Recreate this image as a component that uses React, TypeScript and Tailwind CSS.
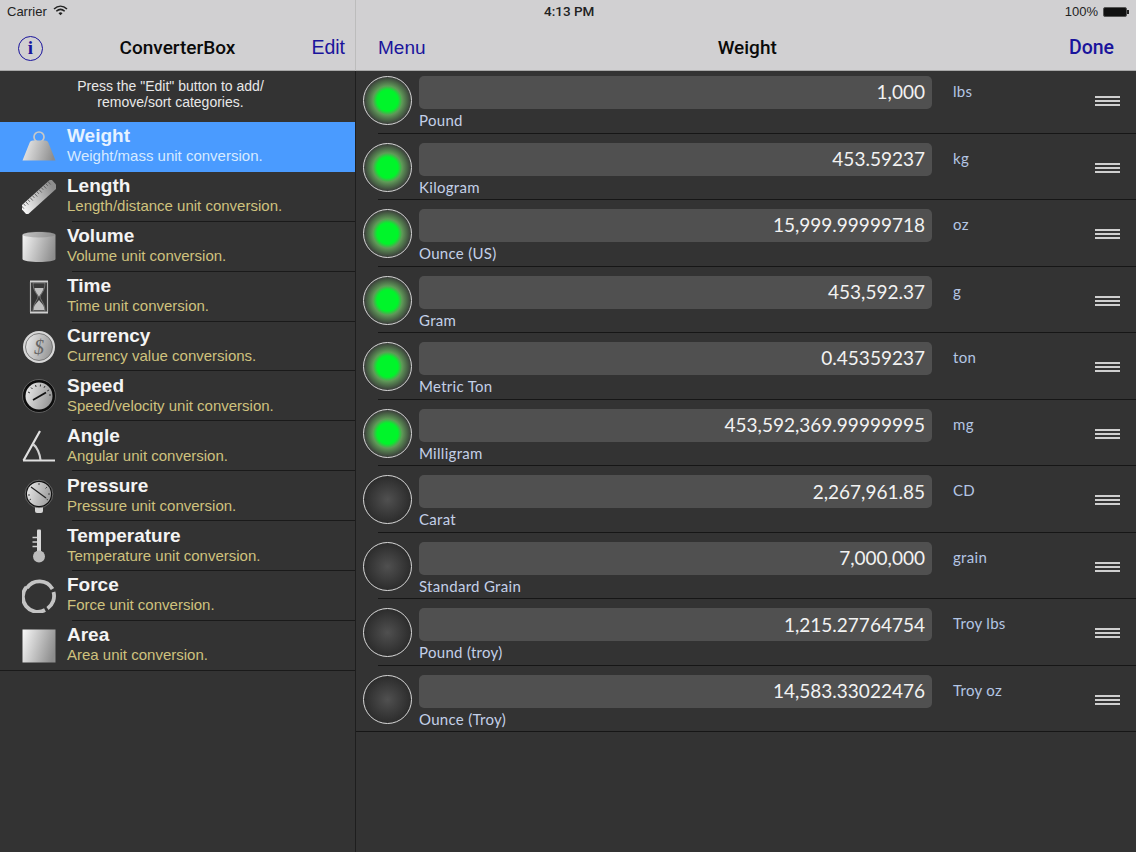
import React from 'react';

const rightFont = "font-['Lato','Noto_Sans',sans-serif]";

function Gradient({ id, from = '#f4f4f4', to = '#8d8d8d' }: { id: string; from?: string; to?: string }) {
  return (
    <defs>
      <linearGradient id={id} gradientUnits="userSpaceOnUse" x1="0" y1="8" x2="34" y2="18">
        <stop offset="0" stopColor={from} />
        <stop offset="1" stopColor={to} />
      </linearGradient>
    </defs>
  );
}

// 34x34 category icons, roughly as in the original bitmaps
function CategoryIcon({ name }: { name: string }) {
  const fill = `url(#g-${name})`;
  let body: React.ReactNode = null;
  if (name === 'Weight') {
    body = (
      <>
        <circle cx="17" cy="7" r="5" fill="none" stroke="#c8c8c8" strokeWidth="1.700" />
        <path d="M11 10.500H23C25 10.500 26 11.500 26.500 13L33.500 30.500H0.500L7.500 13C8 11.500 9 10.500 11 10.500Z" fill={fill} />
      </>
    );
  } else if (name === 'Length') {
    body = (
      <g transform="rotate(-42 17 17)">
        <rect x="-4" y="11.500" width="42" height="11" fill={fill} />
        <path d="M-2 11.500v4M1 11.500v3M4 11.500v4M7 11.500v3M10 11.500v4M13 11.500v3M16 11.500v4M19 11.500v3M22 11.500v4M25 11.500v3M28 11.500v4M31 11.500v3M34 11.500v4" stroke="#555" strokeWidth="0.800" />
      </g>
    );
  } else if (name === 'Volume') {
    body = (
      <>
        <path d="M0.500 5C0.500 1 33.500 1 33.500 5V29C33.500 33 0.500 33 0.500 29Z" fill={fill} />
        <ellipse cx="17" cy="4.500" rx="16.500" ry="3" fill="#777" opacity="0.400" />
      </>
    );
  } else if (name === 'Time') {
    body = (
      <>
        <path d="M8 1.500H26M8 32.500H26" stroke="#d0d0d0" strokeWidth="1.800" />
        <path d="M8.500 2V32M25.500 2V32" stroke="#b0b0b0" strokeWidth="1.200" />
        <path d="M11 3H23C23 11 19 13 18 17C19 21 23 24 23 31H11C11 24 15 21 16 17C15 13 11 11 11 3Z" fill="#3a3a3a" stroke="#999" strokeWidth="0.600" />
        <path d="M12.500 8H21.500C21 12 18 14 17 17C16 14 13 12 12.500 8ZM11.500 30C12 24 15 23 17 20C19 23 22 24 22.500 30Z" fill="#c0c0c0" />
      </>
    );
  } else if (name === 'Currency') {
    body = (
      <>
        <circle cx="17" cy="17" r="16" fill="#d8d8d8" />
        <circle cx="17" cy="17" r="13.500" fill={fill} stroke="#666" strokeWidth="0.800" />
        <text x="17" y="24" textAnchor="middle" fontSize="20" fontFamily="'Liberation Serif',serif" fontStyle="italic" fill="#666">$</text>
      </>
    );
  } else if (name === 'Speed') {
    body = (
      <>
        <circle cx="17" cy="17" r="16.500" fill="#0d0d0d" stroke="#888" strokeWidth="0.600" />
        <circle cx="17" cy="17" r="13.500" fill={fill} />
        <path d="M6 13l2 1M9 8.500l1.500 1.500M13.500 6l.6 2M18.500 5.500l-.2 2M23 7l-1 1.800M27 11l-1.800 1M29 16h-2" stroke="#333" strokeWidth="1" />
        <path d="M11 21L24 13.500" stroke="#111" strokeWidth="1.800" />
      </>
    );
  } else if (name === 'Angle') {
    body = (
      <>
        <path d="M1 31.500H33M1.500 31.500L18 2" fill="none" stroke="#e0e0e0" strokeWidth="2.200" />
        <path d="M11 15C15 18 18 25 18.500 31" fill="none" stroke="#d0d0d0" strokeWidth="2.200" />
      </>
    );
  } else if (name === 'Pressure') {
    body = (
      <>
        <rect x="13" y="26" width="8" height="8" rx="2" fill="#d4d4d4" />
        <circle cx="17" cy="15" r="13.800" fill="#111" stroke="#999" strokeWidth="0.600" />
        <circle cx="17" cy="15" r="12" fill={fill} />
        <path d="M9 8L24 19" stroke="#222" strokeWidth="1.200" />
        <path d="M6 16h2M7.500 21l1.500-1M26 21l-1.500-1M28 15h-2M25 8l-1.500 1.500M17 4v2" stroke="#444" strokeWidth="1" />
      </>
    );
  } else if (name === 'Temperature') {
    body = (
      <>
        <rect x="15" y="0.500" width="4" height="24" rx="1" fill="#d8d8d8" />
        <circle cx="17" cy="27.500" r="6" fill="#bcbcbc" />
        <path d="M10.500 8.500H15M10.500 13H15M10.500 17.500H15" stroke="#d0d0d0" strokeWidth="1.600" />
      </>
    );
  } else if (name === 'Force') {
    body = (
      <path d="M5 9A15 15 0 0 1 30.500 10M31.500 13A15 15 0 0 1 25.500 29.500M23 31A15 15 0 0 1 4.500 8" fill="none" stroke="#c4c4c4" strokeWidth="3.800" />
    );
  } else {
    body = <rect x="0.500" y="0.500" width="33" height="33" fill={fill} />;
  }
  return (
    <svg width="34" height="34" viewBox="0 0 34 34" className="shrink-0">
      <Gradient id={`g-${name}`} />
      {body}
    </svg>
  );
}

const categories = [
  ['Weight', 'Weight/mass unit conversion.'],
  ['Length', 'Length/distance unit conversion.'],
  ['Volume', 'Volume unit conversion.'],
  ['Time', 'Time unit conversion.'],
  ['Currency', 'Currency value conversions.'],
  ['Speed', 'Speed/velocity unit conversion.'],
  ['Angle', 'Angular unit conversion.'],
  ['Pressure', 'Pressure unit conversion.'],
  ['Temperature', 'Temperature unit conversion.'],
  ['Force', 'Force unit conversion.'],
  ['Area', 'Area unit conversion.'],
];

const units = [
  { name: 'Pound', value: '1,000', unit: 'lbs', on: true },
  { name: 'Kilogram', value: '453.59237', unit: 'kg', on: true },
  { name: 'Ounce (US)', value: '15,999.99999718', unit: 'oz', on: true },
  { name: 'Gram', value: '453,592.37', unit: 'g', on: true },
  { name: 'Metric Ton', value: '0.45359237', unit: 'ton', on: true },
  { name: 'Milligram', value: '453,592,369.99999995', unit: 'mg', on: true },
  { name: 'Carat', value: '2,267,961.85', unit: 'CD', on: false },
  { name: 'Standard Grain', value: '7,000,000', unit: 'grain', on: false },
  { name: 'Pound (troy)', value: '1,215.27764754', unit: 'Troy lbs', on: false },
  { name: 'Ounce (Troy)', value: '14,583.33022476', unit: 'Troy oz', on: false },
];

function Lamp({ on }: { on: boolean }) {
  return (
    <div
      className={
        on
          ? 'w-[49px] h-[49px] shrink-0 rounded-full border-[1.500px] border-[#d8d8d8] bg-[radial-gradient(circle_closest-side,#00f52a_0%,#00f52a_44%,#5f9a58_62%,#3a3d3a_100%)]'
          : 'w-[49px] h-[49px] shrink-0 rounded-full border-[1.500px] border-[#d8d8d8] bg-[radial-gradient(circle_closest-side,#505050_0%,#2c2c2c_100%)]'
      }
    />
  );
}

function UnitRow({ name, value, unit, on, last }: { name: string; value: string; unit: string; on: boolean; last: boolean }) {
  return (
    <div className="relative h-[66.550px] flex items-start pl-[7px] pt-[9px]">
      <Lamp on={on} />
      <div className="ml-[7px] w-[513px]">
        <div className="h-[33px] rounded-[5px] bg-[#505050] flex items-center justify-end pr-[7px]">
          <span className={`${rightFont} text-[19px] text-[#f2f2f2]`}>{value}</span>
        </div>
        <div className={`${rightFont} text-[15px] leading-[22px] text-[#c3d0e8] tracking-[0.3px]`}>{name}</div>
      </div>
      <div className={`${rightFont} ml-[21px] w-[142px] text-[15px] leading-[31px] text-[#b4c6e4] tracking-[0.3px]`}>{unit}</div>
      <div className="flex flex-col gap-[2px] mt-[20px]">
        <div className="w-[25px] h-[2px] bg-[#cfcfcf]" />
        <div className="w-[25px] h-[2px] bg-[#cfcfcf]" />
        <div className="w-[25px] h-[2px] bg-[#cfcfcf]" />
      </div>
      <div className={last ? 'absolute left-0 right-0 bottom-0 h-px bg-[#161616]' : 'absolute left-[22px] right-0 bottom-0 h-px bg-[#161616]'} />
    </div>
  );
}

function StatusBar() {
  return (
    <div className="absolute top-0 left-0 right-0 h-[23px] px-[7px] flex items-center justify-between text-[13px] text-[#222] z-20 font-['Liberation_Sans',sans-serif]">
      <div className="flex items-center gap-[6px]">
        <span>Carrier</span>
        <svg width="15" height="11" viewBox="0 0 15 11" className="mb-[3px]">
          <path d="M1 4C5 0.300 10 0.300 14 4M3.300 6.300C6 3.800 9 3.800 11.700 6.300" fill="none" stroke="#222" strokeWidth="1.500" />
          <path d="M5.500 8.200C6.800 7 8.200 7 9.500 8.200L7.500 10.300Z" fill="#222" />
        </svg>
      </div>
      <span className="absolute left-[544px] font-['Roboto',sans-serif] font-medium text-[13.500px]">4:13 PM</span>
      <div className="flex items-center gap-[5px]">
        <span>100%</span>
        <div className="flex items-center">
          <div className="w-[24px] h-[10px] bg-[#111] rounded-[2px] border border-[#555]" />
          <div className="w-[2px] h-[4px] bg-[#222]" />
        </div>
      </div>
    </div>
  );
}

export default function App() {
  return (
    <div className="relative flex w-[1136px] h-[852px] overflow-hidden bg-[#333333] font-['Liberation_Sans',sans-serif]">
      <StatusBar />

      {/* Left: categories */}
      <div className="w-[355px] shrink-0 flex flex-col">
        <div className="h-[71px] bg-[#d1d0d2] border-b border-[#a8a8a8] pt-[26px] flex items-center justify-between pl-[18px] pr-[10px] relative">
          <div className="w-[25px] h-[25px] rounded-full border-[1.500px] border-[#1a149c] flex items-center justify-center text-[19px] font-bold font-['Liberation_Serif',serif] text-[#1a149c]">
            i
          </div>
          <span className="absolute left-0 w-[355px] text-center text-[19px] font-['Roboto',sans-serif] font-medium text-[#0a0a0a]">ConverterBox</span>
          <span className="text-[19.500px] text-[#1a149c]">Edit</span>
        </div>
        <div className="h-[51px] pt-[8px] text-center text-[14px] leading-[15.500px] text-[#e8e8e8] pr-[14px]">
          Press the "Edit" button to add/
          <br />
          remove/sort categories.
        </div>
        {categories.map(([name, desc], i) => (
          <div key={name} className={i === 0 ? 'relative h-[49.900px] flex items-center bg-[#4a9bff]' : 'relative h-[49.900px] flex items-center'}>
            <div className="w-[67px] pl-[22px] shrink-0 flex">
              <CategoryIcon name={name} />
            </div>
            <div className="pb-[5px]">
              <div className={i === 0 ? 'text-[19px] leading-[23px] font-bold text-[#e6f2ff]' : 'text-[19px] leading-[23px] font-bold text-[#f4f4f4]'}>{name}</div>
              <div className={i === 0 ? 'text-[15px] leading-[17px] text-[#d6eaff]' : 'text-[15px] leading-[17px] text-[#cfc27e]'}>{desc}</div>
            </div>
            {i > 0 && <div className={i === 10 ? 'absolute left-0 right-0 bottom-0 h-px bg-[#1a1a1a]' : 'absolute left-[72px] right-0 bottom-0 h-px bg-[#1a1a1a]'} />}
          </div>
        ))}
      </div>

      {/* Right: unit list */}
      <div className="flex-1 min-w-0 flex flex-col">
        <div className="relative z-10 h-[71px] shrink-0 bg-[#d1d0d2] border-b border-l border-b-[#a8a8a8] border-l-[#bcbcbc] pt-[26px] flex items-center justify-between pl-[22px] pr-[22px]">
          <span className="text-[19px] text-[#1a149c]">Menu</span>
          <span className="text-[19px] font-['Roboto',sans-serif] font-medium text-[#0a0a0a]">Weight</span>
          <span className="text-[19.500px] font-['Roboto',sans-serif] font-medium text-[#1a149c]">Done</span>
        </div>
        <div className="flex-1 -mt-[4px] border-l border-[#1e1e1e]">
          {units.map((u, i) => (
            <UnitRow key={u.name} {...u} last={i === units.length - 1} />
          ))}
        </div>
      </div>
    </div>
  );
}
